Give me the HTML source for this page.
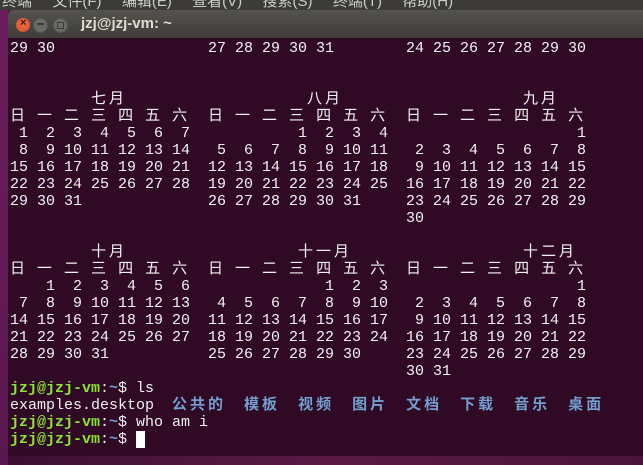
<!DOCTYPE html>
<html><head><meta charset="utf-8"><style>
*{margin:0;padding:0}
body{width:643px;height:465px;overflow:hidden;background:#4a1540;position:relative;font-family:"Liberation Mono","Noto Sans CJK SC",monospace}
#menu{position:absolute;left:0;top:0;width:643px;height:10px;background:#3c3b37;overflow:hidden}
#menu span{position:absolute;top:-10px;left:2px;color:#ccc;font:15px "Liberation Sans","Noto Sans CJK SC",sans-serif;white-space:pre;word-spacing:6px}
#left{position:absolute;left:0;top:10px;width:8px;height:455px;background:linear-gradient(#6a1d5c,#5a1850)}
#title{position:absolute;left:8px;top:10px;width:635px;height:28px;background:linear-gradient(#55534e,#3e3d39);border-radius:5px 0 0 0}
#title .t{position:absolute;left:73px;top:5px;color:#dfdbd2;font:bold 15px "Liberation Sans",sans-serif}
.b{position:absolute;top:8px;width:14px;height:14px;border-radius:50%}
#term{position:absolute;left:8px;top:38px;width:635px;height:418px;background:#300a24}
#bot{position:absolute;left:8px;top:456px;width:635px;height:9px;background:linear-gradient(90deg,#3c1032,#5a1a45,#4a1438)}
pre{position:absolute;top:40px;font:15px/17px "Liberation Mono","Noto Sans CJK SC",monospace;color:#f2f2f2}
.c{display:inline-block;width:18px;text-align:left}
.g{color:#8ae234;font-weight:bold}.u{color:#729fcf;font-weight:bold}
.cur{display:inline-block;width:9px;height:17px;background:#fff;vertical-align:top}
</style></head><body>
<div id="menu"><span>终端  文件(F)  编辑(E)  查看(V)  搜索(S)  终端(T)  帮助(H)</span></div>
<div id="left"></div>
<div id="title">
<div class="b" style="left:8px;background:radial-gradient(circle at 50% 40%,#f0714a,#d44b1e)"></div>
<div class="b" style="left:25px;background:#6b6a65;border:1px solid #555;width:13px;height:13px"></div>
<div class="b" style="left:45px;background:#6b6a65;border:1px solid #555;width:13px;height:13px"></div>
<span style="position:absolute;left:12px;top:7px;color:#3a1a10;font:bold 11px 'Liberation Sans'">×</span>
<span style="position:absolute;left:29px;top:13px;width:7px;height:2px;background:#3c3b37"></span>
<span style="position:absolute;left:49px;top:12px;width:5px;height:5px;border:1px solid #3c3b37"></span>
<div class="t">jzj@jzj-vm: ~</div>
</div>
<div id="term"></div>
<div id="bot"></div>
<pre style="left:10px">29 30


         <span class="c">七</span><span class="c">月</span>
<span class="c">日</span> <span class="c">一</span> <span class="c">二</span> <span class="c">三</span> <span class="c">四</span> <span class="c">五</span> <span class="c">六</span>
 1  2  3  4  5  6  7
 8  9 10 11 12 13 14
15 16 17 18 19 20 21
22 23 24 25 26 27 28
29 30 31


         <span class="c">十</span><span class="c">月</span>
<span class="c">日</span> <span class="c">一</span> <span class="c">二</span> <span class="c">三</span> <span class="c">四</span> <span class="c">五</span> <span class="c">六</span>
    1  2  3  4  5  6
 7  8  9 10 11 12 13
14 15 16 17 18 19 20
21 22 23 24 25 26 27
28 29 30 31
</pre>
<pre style="left:208px">27 28 29 30 31


           <span class="c">八</span><span class="c">月</span>
<span class="c">日</span> <span class="c">一</span> <span class="c">二</span> <span class="c">三</span> <span class="c">四</span> <span class="c">五</span> <span class="c">六</span>
          1  2  3  4
 5  6  7  8  9 10 11
12 13 14 15 16 17 18
19 20 21 22 23 24 25
26 27 28 29 30 31


          <span class="c">十</span><span class="c">一</span><span class="c">月</span>
<span class="c">日</span> <span class="c">一</span> <span class="c">二</span> <span class="c">三</span> <span class="c">四</span> <span class="c">五</span> <span class="c">六</span>
             1  2  3
 4  5  6  7  8  9 10
11 12 13 14 15 16 17
18 19 20 21 22 23 24
25 26 27 28 29 30
</pre>
<pre style="left:406px">24 25 26 27 28 29 30


             <span class="c">九</span><span class="c">月</span>
<span class="c">日</span> <span class="c">一</span> <span class="c">二</span> <span class="c">三</span> <span class="c">四</span> <span class="c">五</span> <span class="c">六</span>
                   1
 2  3  4  5  6  7  8
 9 10 11 12 13 14 15
16 17 18 19 20 21 22
23 24 25 26 27 28 29
30

             <span class="c">十</span><span class="c">二</span><span class="c">月</span>
<span class="c">日</span> <span class="c">一</span> <span class="c">二</span> <span class="c">三</span> <span class="c">四</span> <span class="c">五</span> <span class="c">六</span>
                   1
 2  3  4  5  6  7  8
 9 10 11 12 13 14 15
16 17 18 19 20 21 22
23 24 25 26 27 28 29
30 31
</pre>
<pre style="left:10px;top:380px"><span class="g">jzj@jzj-vm</span>:<span class="u">~</span>$ ls
examples.desktop  <span class="u"><span class="c">公</span><span class="c">共</span><span class="c">的</span></span>  <span class="u"><span class="c">模</span><span class="c">板</span></span>  <span class="u"><span class="c">视</span><span class="c">频</span></span>  <span class="u"><span class="c">图</span><span class="c">片</span></span>  <span class="u"><span class="c">文</span><span class="c">档</span></span>  <span class="u"><span class="c">下</span><span class="c">载</span></span>  <span class="u"><span class="c">音</span><span class="c">乐</span></span>  <span class="u"><span class="c">桌</span><span class="c">面</span></span>
<span class="g">jzj@jzj-vm</span>:<span class="u">~</span>$ who am i
<span class="g">jzj@jzj-vm</span>:<span class="u">~</span>$ <span class="cur"></span></pre>
</body></html>
